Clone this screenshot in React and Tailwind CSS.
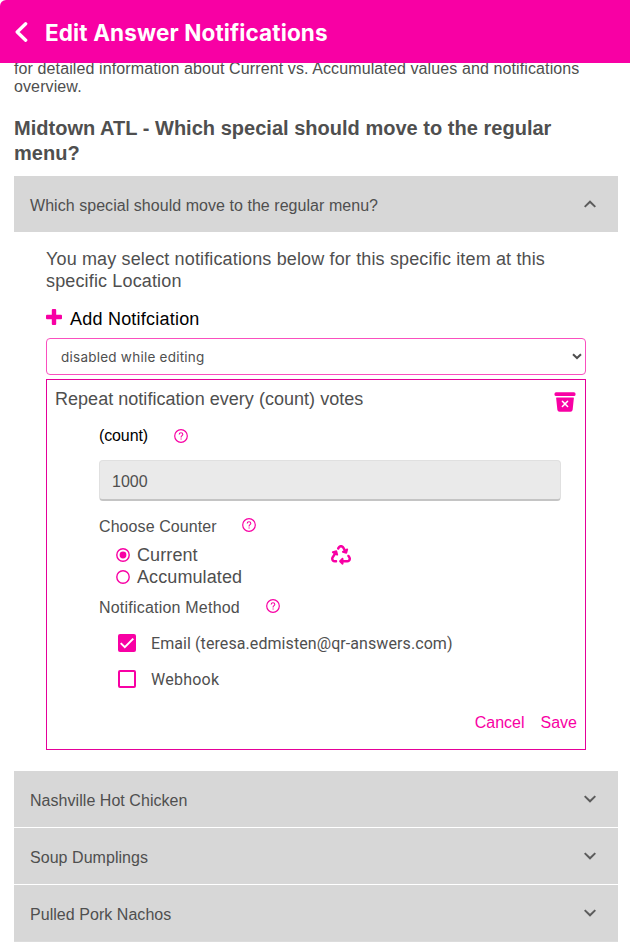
import React from "react";
import { IoTrashBin } from "react-icons/io5";
import { FaRecycle } from "react-icons/fa6";

const helv = "font-['Liberation_Sans',Arial,sans-serif]";

function Chevron({ up }) {
  return (
    <svg width="12" height="8" viewBox="0 0 12 8" className="shrink-0" fill="none" stroke="#5c5c5c" strokeWidth="2">
      <path d={up ? "M0.7 6.9 6 1.7l5.3 5.2" : "M0.7 1.1 6 6.3l5.3-5.2"} />
    </svg>
  );
}

function Help() {
  return (
    <svg width="14" height="14" viewBox="0 0 14 14" fill="none" stroke="#f800a4" className="shrink-0">
      <circle cx="7" cy="7" r="6.3" strokeWidth="1.2" />
      <path d="M5.2 5.5C5.2 4.3 6 3.7 7 3.7s1.8.7 1.8 1.7c0 1.2-1.7 1.4-1.7 2.7v.3" strokeWidth="1.1" />
      <path d="M7.1 9.4v1.2" strokeWidth="1.2" />
    </svg>
  );
}

function PanelHeader({ title, up }) {
  return (
    <div className="flex h-14 items-center justify-between bg-[#d7d7d7] pl-4 pr-[22px]">
      <span className="pt-1 text-[16px] leading-5 tracking-[0.045px] whitespace-nowrap">{title}</span>
      <Chevron up={up} />
    </div>
  );
}

function Radio({ checked, label }) {
  return (
    <div className="flex h-[22px] items-center">
      <svg width="14" height="14" viewBox="0 0 14 14" fill="none" stroke="#f800a4" className="shrink-0">
        <circle cx="7" cy="7" r="6.2" strokeWidth="1.4" />
        {checked && <circle cx="7" cy="7" r="3.4" fill="#f800a4" stroke="none" />}
      </svg>
      <span className="ml-[7px] text-[18px] leading-[22px] tracking-[0.1px]">{label}</span>
    </div>
  );
}

function Check({ checked, label }) {
  return (
    <div className="flex h-9 items-center">
      <span
        className={
          checked
            ? "mb-0.5 flex size-[18px] items-center justify-center rounded-[2px] bg-[#f800a4]"
            : "mb-0.5 size-[18px] rounded-[2px] border-2 border-[#f800a4]"
        }
      >
        {checked && (
          <svg width="16" height="12" viewBox="0 0 16 12" fill="none" stroke="#fff" strokeWidth="2">
            <path d="M1.7 6.1 5.8 10.1 14.3 1.6" />
          </svg>
        )}
      </span>
      <span
        className={
          checked
            ? "ml-[15px] font-[Roboto,sans-serif] text-[16px] leading-5 tracking-[0.08px] whitespace-nowrap"
            : "ml-[15px] font-[Roboto,sans-serif] text-[16px] leading-5 tracking-[0.25px] whitespace-nowrap"
        }
      >
        {label}
      </span>
    </div>
  );
}

export default function App() {
  return (
    <div className={`${helv} h-[942px] w-[630px] overflow-hidden bg-white text-[#4f4f4f]`}>
      <header className="relative z-10 flex h-[63px] items-center rounded-tl-[6px] bg-[#f800a4] pl-[14px] text-white">
        <svg width="14" height="22" viewBox="0 0 14 22" fill="none" stroke="#fff" strokeWidth="3.3" strokeLinecap="round" strokeLinejoin="round">
          <path d="M11.7 2.8 3.2 11 11.7 19.2" />
        </svg>
        <h1 className="ml-[17px] pt-[3px] font-[Inter,sans-serif] text-[22.5px] leading-7 font-bold tracking-[0.13px] whitespace-nowrap">Edit Answer Notifications</h1>
      </header>
      <main className="-mt-[3px] px-[14px] pr-3">
        <p className="text-[16px] leading-[18px] tracking-[0.11px]">
          for detailed information about Current vs. Accumulated values and notifications
          <br />
          overview.
        </p>
        <h2 className="mt-5 text-[20px] leading-[25px] font-bold tracking-[0.02px]">
          Midtown ATL - Which special should move to the regular
          <br />
          menu?
        </h2>
        <div className="mt-[10px]">
          <PanelHeader title="Which special should move to the regular menu?" up />
        </div>
        <section className="h-[539px] pt-4 pr-8 pl-8">
          <p className="text-[18px] leading-[22px] tracking-[0.145px] whitespace-nowrap">
            You may select notifications below for this specific item at this
            <br />
            specific Location
          </p>
          <div className="mt-[14px] flex h-[22px] items-center text-[18px] leading-[22px] text-black">
            <svg width="16" height="16" viewBox="0 0 16 16" fill="#f800a4">
              <rect x="0" y="5.8" width="16" height="4.4" rx="1" />
              <rect x="5.8" y="0" width="4.4" height="16" rx="1" />
            </svg>
            <span className="ml-2 pt-1 tracking-[0.22px]">Add Notifciation</span>
          </div>
          <div className="mt-[10px] flex h-[37px] items-center justify-between rounded-[4px] border border-[#fa4fbf] pr-[3px] pl-[14px]">
            <span className="pt-px font-[Inter,sans-serif] text-[13.5px] tracking-[0.24px]">disabled while editing</span>
            <svg width="10" height="7" viewBox="0 0 10 7" fill="none" stroke="#4f4f4f" strokeWidth="2">
              <path d="M1 1.2 5 5l4-3.8" />
            </svg>
          </div>
          <div className="mt-1 h-[371px] border border-[#e5009a] px-2">
            <div className="flex h-[42px] items-start justify-between">
              <span className="pt-2 text-[18px] leading-[22px] tracking-[0.03px]">Repeat notification every (count) votes</span>
              <IoTrashBin className="mt-[10px] size-6 text-[#f800a4]" />
            </div>
            <div className="pr-4 pl-11">
              <div className="flex h-7 items-center text-[16px] text-black">
                <span className="tracking-[-0.12px]">(count)</span>
                <span className="ml-[26px]"><Help /></span>
              </div>
              <div className="mt-[10px] flex h-[41px] items-center rounded-[4px] border border-b-2 border-[#e0e0e0] border-b-[#c4c4c4] bg-[#eaeaea] pt-1 pl-3 text-[16px]">1000</div>
              <div className="mt-[14px] flex h-6 items-center text-[16px]">
                <span className="tracking-[0.08px]">Choose Counter</span>
                <span className="mb-1 ml-[25px]"><Help /></span>
              </div>
              <div className="mt-[5px] flex pl-[17px]">
                <div className="w-[215px]">
                  <Radio checked label="Current" />
                  <Radio label="Accumulated" />
                </div>
                <FaRecycle className="mt-px size-5 text-[#f800a4]" />
              </div>
              <div className="mt-2 flex h-6 items-center text-[16px]">
                <span className="tracking-[0.21px]">Notification Method</span>
                <span className="mb-1 ml-[26px]"><Help /></span>
              </div>
              <div className="mt-[6px] pl-[19px]">
                <Check checked label="Email (teresa.edmisten@qr-answers.com)" />
                <Check label="Webhook" />
              </div>
            </div>
            <div className="mt-[13px] flex justify-end gap-4 text-[16px] leading-6 text-[#f800a4]">
              <span>Cancel</span>
              <span>Save</span>
            </div>
          </div>
        </section>
        <div className="flex flex-col gap-px border-b border-[#dcdcdc]">
          <PanelHeader title="Nashville Hot Chicken" />
          <PanelHeader title="Soup Dumplings" />
          <PanelHeader title="Pulled Pork Nachos" />
        </div>
      </main>
    </div>
  );
}
